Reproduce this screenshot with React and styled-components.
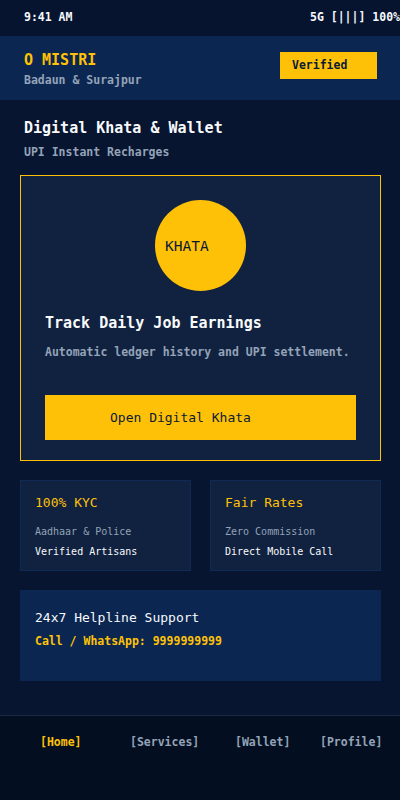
import React from "react";
import styled, { createGlobalStyle } from "styled-components";

const GlobalStyle = createGlobalStyle`
  * {
    box-sizing: border-box;
  }
  body {
    margin: 0;
    background: #061430;
    font-family: "DejaVu Sans Mono", "Liberation Mono", monospace;
  }
`;

const navItems = ["[Home]", "[Services]", "[Wallet]", "[Profile]"];

const App = () => {
  return (
    <Screen>
      <GlobalStyle />
      <StatusBar>
        <span>9:41 AM</span>
        <span>5G [|||] 100%</span>
      </StatusBar>

      <Header>
        <div>
          <Name>O MISTRI</Name>
          <Location>Badaun &amp; Surajpur</Location>
        </div>
        <Badge>Verified</Badge>
      </Header>

      <Content>
        <SectionTitle>Digital Khata &amp; Wallet</SectionTitle>
        <SectionSub>UPI Instant Recharges</SectionSub>

        <KhataCard>
          <Coin>KHATA</Coin>
          <CardTitle>Track Daily Job Earnings</CardTitle>
          <CardText>Automatic ledger history and UPI settlement.</CardText>
          <PrimaryButton>Open Digital Khata</PrimaryButton>
        </KhataCard>

        <Features>
          <Feature>
            <FeatureTitle>100% KYC</FeatureTitle>
            <FeatureMuted>Aadhaar &amp; Police</FeatureMuted>
            <FeatureText>Verified Artisans</FeatureText>
          </Feature>
          <Feature>
            <FeatureTitle>Fair Rates</FeatureTitle>
            <FeatureMuted>Zero Commission</FeatureMuted>
            <FeatureText>Direct Mobile Call</FeatureText>
          </Feature>
        </Features>

        <Helpline>
          <HelpTitle>24x7 Helpline Support</HelpTitle>
          <HelpPhone>Call / WhatsApp: 9999999999</HelpPhone>
        </Helpline>
      </Content>

      <BottomNav>
        {navItems.map((item, i) => (
          <NavItem key={item} $active={i === 0}>
            {item}
          </NavItem>
        ))}
      </BottomNav>
    </Screen>
  );
};

const Screen = styled.div`
  min-height: 800px;
  width: 400px;
  overflow: hidden;
  display: flex;
  flex-direction: column;
  background: #071530;
`;

const StatusBar = styled.div`
  height: 36px;
  display: flex;
  justify-content: space-between;
  align-items: center;
  padding: 0 0 2px 24px;
  background: #061430;
  color: #f8fafc;
  font-size: 11.5px;
  font-weight: bold;
  white-space: nowrap;
`;

const Header = styled.div`
  display: flex;
  justify-content: space-between;
  align-items: flex-start;
  padding: 15px 23px 12px 24px;
  background: #0b2751;
`;

const Name = styled.div`
  color: #ffc107;
  font-size: 15px;
  line-height: 18px;
  font-weight: 600;
`;

const Location = styled.div`
  margin-top: 3px;
  color: #94a3b8;
  font-size: 11.5px;
  line-height: 16px;
  font-weight: bold;
`;

const Badge = styled.div`
  width: 97px;
  margin-top: 1px;
  padding: 6px 12px;
  background: #ffc107;
  color: #0a1a33;
  font-size: 11.5px;
  line-height: 15px;
  font-weight: bold;
`;

const Content = styled.div`
  padding: 19px 19px 0 20px;
`;

const SectionTitle = styled.div`
  padding-left: 4px;
  color: #f8fafc;
  font-size: 15px;
  line-height: 18px;
  font-weight: 600;
`;

const SectionSub = styled.div`
  margin-top: 7px;
  padding-left: 4px;
  color: #94a3b8;
  font-size: 11.5px;
  line-height: 16px;
  font-weight: bold;
`;

const KhataCard = styled.div`
  margin-top: 15px;
  padding: 24px 24px 20px;
  background: #10223f;
  border: 1px solid #ffc107;
  display: flex;
  flex-direction: column;
`;

const Coin = styled.div`
  width: 91px;
  height: 91px;
  align-self: center;
  border-radius: 50%;
  background: #ffc107;
  display: flex;
  align-items: center;
  padding-left: 10px;
  color: #0a1a33;
  font-size: 14.5px;
`;

const CardTitle = styled.div`
  margin-top: 23px;
  color: #f8fafc;
  font-size: 15px;
  line-height: 18px;
  font-weight: 600;
`;

const CardText = styled.div`
  margin-top: 12px;
  color: #94a3b8;
  font-size: 11.5px;
  line-height: 16px;
  font-weight: bold;
  white-space: nowrap;
`;

const PrimaryButton = styled.button`
  margin-top: 35px;
  height: 45px;
  border: none;
  background: #ffc107;
  color: #0a1a33;
  font-family: inherit;
  font-size: 13px;
  text-align: left;
  padding: 0 0 0 65px;
`;

const Features = styled.div`
  margin-top: 19px;
  display: grid;
  grid-template-columns: 1fr 1fr;
  gap: 19px;
`;

const Feature = styled.div`
  height: 91px;
  padding: 14px 14px 0;
  background: #10223f;
  border: 1px solid #0f2a55;
`;

const FeatureTitle = styled.div`
  color: #ffc107;
  font-size: 13px;
  line-height: 16px;
`;

const FeatureMuted = styled.div`
  margin-top: 14px;
  color: #94a3b8;
  font-size: 10px;
  line-height: 14px;
`;

const FeatureText = styled.div`
  margin-top: 6px;
  color: #f8fafc;
  font-size: 10px;
  line-height: 14px;
`;

const Helpline = styled.div`
  margin-top: 19px;
  height: 91px;
  padding: 20px 15px 0;
  background: #0b2751;
`;

const HelpTitle = styled.div`
  color: #f8fafc;
  font-size: 13px;
  line-height: 16px;
`;

const HelpPhone = styled.div`
  margin-top: 7px;
  color: #ffc107;
  font-size: 11.5px;
  line-height: 16px;
  font-weight: bold;
`;

const BottomNav = styled.div`
  margin-top: auto;
  height: 85px;
  display: grid;
  grid-template-columns: 90px 105px 85px auto;
  padding: 18px 0 0 40px;
  background: #030f20;
  border-top: 1px solid #1a2a42;
`;

const NavItem = styled.div`
  color: ${(p) => (p.$active ? "#ffc107" : "#94a3b8")};
  font-size: 11.5px;
  line-height: 16px;
  font-weight: bold;
  white-space: nowrap;
`;

export default App;
